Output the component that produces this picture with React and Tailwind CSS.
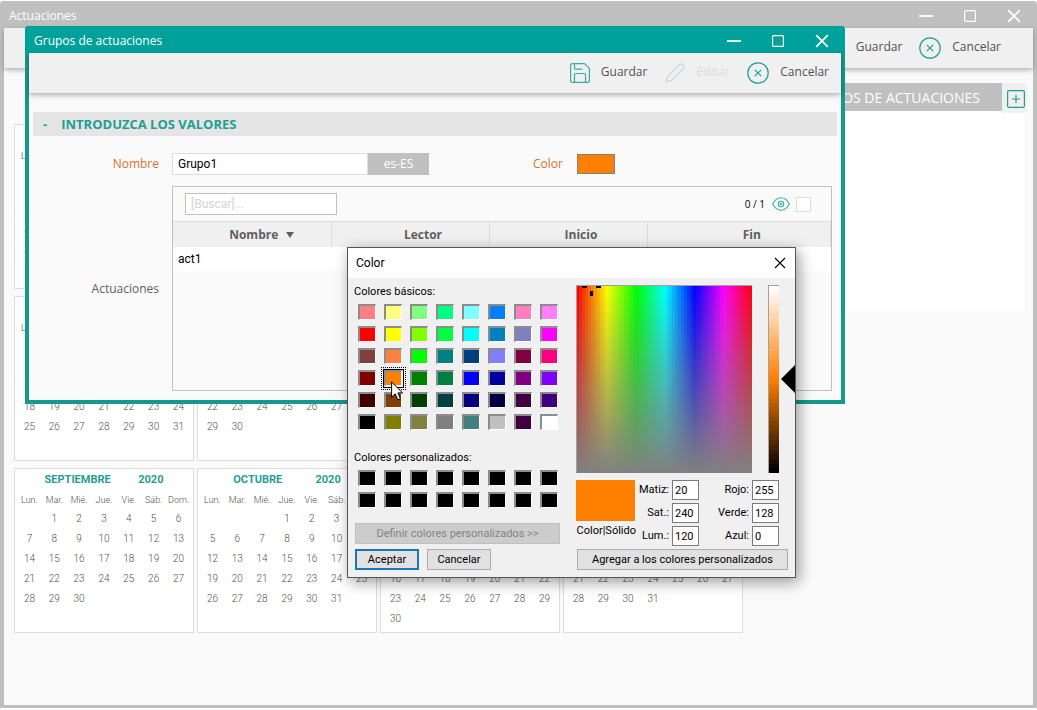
import React from "react";

const WEEKDAYS = ["Lun.", "Mar.", "Mié.", "Jue.", "Vie.", "Sáb.", "Dom."];

// start = empty cells before day 1 (week starts on Monday)
const MONTHS = [
  { name: "ENERO", start: 2, days: 31 },
  { name: "FEBRERO", start: 5, days: 29 },
  { name: "MARZO", start: 6, days: 31 },
  { name: "ABRIL", start: 2, days: 30 },
  { name: "MAYO", start: 4, days: 31 },
  { name: "JUNIO", start: 0, days: 30 },
  { name: "JULIO", start: 2, days: 31 },
  { name: "AGOSTO", start: 5, days: 31 },
  { name: "SEPTIEMBRE", start: 1, days: 30 },
  { name: "OCTUBRE", start: 3, days: 31 },
  { name: "NOVIEMBRE", start: 6, days: 30 },
  { name: "DICIEMBRE", start: 1, days: 31 },
];

const BASIC_COLORS = [
  "#ff8080", "#ffff80", "#80ff80", "#00ff80", "#80ffff", "#0080ff", "#ff80c0", "#ff80ff",
  "#ff0000", "#ffff00", "#80ff00", "#00ff40", "#00ffff", "#0080c0", "#8080c0", "#ff00ff",
  "#804040", "#ff8040", "#00ff00", "#008080", "#004080", "#8080ff", "#800040", "#ff0080",
  "#800000", "#ff8000", "#008000", "#008040", "#0000ff", "#0000a0", "#800080", "#8000ff",
  "#400000", "#804000", "#004000", "#004040", "#000080", "#000040", "#400040", "#400080",
  "#000000", "#808000", "#808040", "#808080", "#408080", "#c0c0c0", "#400040", "#ffffff",
];

const CUSTOM_COLORS = Array(16).fill("#000000");

function SaveIcon() {
  return (
    <svg width="20" height="20" viewBox="0 0 20 20" fill="none" stroke="#3aaea4" strokeWidth="1.2">
      <path d="M2.5 .6H14.5L19.4 5.4V17.5Q19.4 19.4 17.5 19.4H2.5Q.6 19.4 .6 17.5V2.5Q.6 .6 2.5 .6Z" />
      <path d="M4.5 .6V5.2Q4.5 6.2 5.5 6.2H12.5" />
      <path d="M4.5 19.4V11.5Q4.5 10.5 5.5 10.5H14.5Q15.5 10.5 15.5 11.5V19.4" />
    </svg>
  );
}

function PencilIcon() {
  return (
    <svg width="20" height="20" viewBox="0 0 20 20" fill="none" stroke="#b9ded9" strokeWidth="1.2">
      <path d="M1 19L2.6 13.4L14.2 1.9Q16.4 .2 18.2 1.9Q19.9 3.8 18.2 5.8L6.6 17.4Z" />
    </svg>
  );
}

function CancelIcon() {
  return (
    <svg width="22" height="22" viewBox="0 0 22 22" fill="none" stroke="#1fa096" strokeWidth="1.2">
      <circle cx="11" cy="11" r="10.2" />
      <path d="M7.8 7.8L14.2 14.2M14.2 7.8L7.8 14.2" />
    </svg>
  );
}

function EyeIcon() {
  return (
    <svg width="18" height="14" viewBox="0 0 18 14" fill="none" stroke="#3aaea4" strokeWidth="1.1">
      <path d="M.7 7Q4 .8 9 .8T17.3 7Q14 13.2 9 13.2T.7 7Z" />
      <circle cx="9" cy="7" r="2.7" />
      <circle cx="9" cy="7" r=".6" />
    </svg>
  );
}

function WindowButtons() {
  return (
    <div className="flex gap-[30px]">
      <button aria-label="Minimizar">
        <svg width="14" height="14" stroke="#fff" strokeWidth="1.8">
          <path d="M0 7H14" />
        </svg>
      </button>
      <button aria-label="Maximizar">
        <svg width="14" height="14" fill="none" stroke="#fff" strokeWidth="1.2">
          <rect x="1.6" y="1.6" width="10.8" height="10.8" rx="1" />
        </svg>
      </button>
      <button aria-label="Cerrar">
        <svg width="14" height="14" stroke="#fff" strokeWidth="1.7">
          <path d="M1.2 1.2L12.8 12.8M12.8 1.2L1.2 12.8" />
        </svg>
      </button>
    </div>
  );
}

function ToolbarButton({ icon, label, disabled }) {
  return (
    <button
      disabled={disabled}
      className="flex items-center gap-[11px] text-[12px] leading-5 text-[#505050] disabled:text-[#dcdcdc]"
    >
      {icon}
      <span className="pb-0.5">{label}</span>
    </button>
  );
}

function Month({ name, start, days }) {
  const cells = [...Array(start).fill(""), ...Array.from({ length: days }, (_, i) => i + 1)];
  while (cells.length % 7) cells.push("");
  const weeks = [];
  for (let i = 0; i < cells.length; i += 7) weeks.push(cells.slice(i, i + 7));

  return (
    <div className="h-[165px] border border-[#dcdcdc] bg-white px-0.5 font-[Roboto,sans-serif]">
      <div className="flex h-[22px] items-center justify-evenly text-[11px] font-bold text-[#1f9e94]">
        <span>{name}</span>
        <span>2020</span>
      </div>
      <table className="w-full table-fixed text-center text-[#505050]">
        <thead>
          <tr>
            {WEEKDAYS.map((d) => (
              <th key={d} className="h-[18px] p-0 text-[9px] leading-none font-light">
                {d}
              </th>
            ))}
          </tr>
        </thead>
        <tbody>
          {weeks.map((week, i) => (
            <tr key={i}>
              {week.map((day, j) => (
                <td key={j} className="h-5 p-0 text-[10px] leading-none font-light">
                  {day}
                </td>
              ))}
            </tr>
          ))}
        </tbody>
      </table>
    </div>
  );
}

function GroupsDialog() {
  return (
    <section className="absolute top-[25px] left-[21px] flex h-[378px] w-[820px] flex-col rounded-t-sm bg-[#14998f] px-1 pb-1">
      <header className="-mx-1 flex h-[27px] shrink-0 items-center justify-between rounded-t-sm bg-[#00a19a] pt-0.5 pr-4 pl-[9px]">
        <h2 className="text-[12px] leading-5 text-white">Grupos de actuaciones</h2>
        <WindowButtons />
      </header>
      <div className="flex-1 bg-[#fafafa]">
        <div className="flex h-10 items-center justify-end gap-[18px] bg-[#f0f0f0] pr-3 shadow-[0_2px_5px_rgba(0,0,0,0.3)]">
          <ToolbarButton icon={<SaveIcon />} label="Guardar" />
          <ToolbarButton icon={<PencilIcon />} label="Editar" disabled />
          <ToolbarButton icon={<CancelIcon />} label="Cancelar" />
        </div>

        <h3 className="mx-1 mt-[19px] flex h-6 items-center gap-[14px] bg-[#e5e5e5] pt-0.5 pl-[10px] text-[13px] font-bold text-[#1f9e94]">
          <span>-</span>
          <span>INTRODUZCA LOS VALORES</span>
        </h3>

        <div className="mt-[17px] flex h-[22px] items-center">
          <label htmlFor="nombre" className="w-[130px] text-right text-[12px] text-[#d9702b]">
            Nombre
          </label>
          <input
            id="nombre"
            defaultValue="Grupo1"
            className="ml-[13px] h-[22px] w-[196px] border border-[#dcdcdc] bg-white px-[5px] font-[Roboto,sans-serif] text-[12px] text-black"
          />
          <button className="h-[22px] w-[61px] bg-[#c0c0c0] text-[12px] text-white">es-ES</button>
          <span className="ml-[104px] w-[30px] text-[12px] text-[#d9702b]">Color</span>
          <button aria-label="Color" className="ml-[14px] h-5 w-[38px] border border-[#808080] bg-[#ff8000]" />
        </div>

        <div className="mt-[11px] mr-[9px] flex h-[205px] items-center">
          <span className="w-[130px] text-right text-[12px] text-[#606060]">Actuaciones</span>
          <div className="ml-[13px] h-full flex-1 border border-[#c0c0c0]">
            <div className="flex h-[34px] items-center pr-5 pl-3">
              <input
                aria-label="Buscar"
                placeholder="[Buscar]..."
                className="h-[22px] w-[152px] border border-[#c0c0c0] bg-white px-[5px] font-[Roboto,sans-serif] text-[12px] placeholder:text-[#d4d4d4]"
              />
              <span className="ml-auto text-[10px] text-black">0 / 1</span>
              <button aria-label="Ver" className="ml-[7px]">
                <EyeIcon />
              </button>
              <input
                type="checkbox"
                aria-label="Seleccionar todo"
                className="ml-[6px] size-[15px] appearance-none border border-[#dcdcdc] bg-white"
              />
            </div>
            <table className="w-full table-fixed">
              <thead>
                <tr className="h-[25px] border-t border-[#dcdcdc] bg-[#f0f0f0] text-[12px] text-[#606060]">
                  <th className="w-[158px] border-r border-[#dcdcdc] p-0 pt-0.5 pl-5 font-bold">
                    <span className="flex items-center justify-center gap-2">
                      Nombre
                      <svg width="8" height="6" fill="#606060">
                        <path d="M0 0H8L4 6Z" />
                      </svg>
                    </span>
                  </th>
                  <th className="w-[158px] border-r border-[#dcdcdc] p-0 pt-0.5 pl-[26px] font-bold">Lector</th>
                  <th className="w-[158px] border-r border-[#dcdcdc] p-0 pt-0.5 pl-[26px] font-bold">Inicio</th>
                  <th className="border-r border-[#dcdcdc] p-0 pt-0.5 pl-[26px] font-bold">Fin</th>
                </tr>
              </thead>
              <tbody>
                <tr className="h-6 bg-white font-[Roboto,sans-serif] text-[12px] text-black">
                  <td className="p-0 pl-[5px]">act1</td>
                  <td />
                  <td />
                  <td />
                </tr>
              </tbody>
            </table>
          </div>
        </div>
      </div>
    </section>
  );
}

function Swatch({ color, selected }) {
  return (
    <button
      aria-label={color}
      style={{ backgroundColor: color }}
      className="relative h-4 w-[18px] border border-t-2 border-l-2 border-t-[#8c8c8c] border-r-white border-b-white border-l-[#8c8c8c]"
    >
      {selected && (
        <>
          <span className="absolute -inset-[3px] border border-black" />
          <span className="absolute -inset-[5px] border border-dotted border-black" />
        </>
      )}
    </button>
  );
}

function Spectrum() {
  return (
    <svg width="176" height="188" shapeRendering="crispEdges">
      <defs>
        <linearGradient id="fade" x1="0" y1="0" x2="0" y2="1">
          <stop offset="0" stopColor="#808080" stopOpacity="0" />
          <stop offset="1" stopColor="#808080" />
        </linearGradient>
      </defs>
      {Array.from({ length: 59 }, (_, i) => (
        <rect key={i} x={i * 3} y="0" width="3" height="188" fill={`hsl(${i * 6.15} 100% 50%)`} />
      ))}
      <rect width="176" height="188" fill="url(#fade)" />
      <path d="M0 .5H176M.5 0V188" stroke="#a0a0a0" />
      <path d="M6 1h5v2h-5zM20 1h5v2h-5zM14 6h3v5h-3z" fill="#000" />
    </svg>
  );
}

function LuminanceBar() {
  return (
    <div className="flex">
      <svg width="11" height="188" shapeRendering="crispEdges">
        {Array.from({ length: 40 }, (_, i) => (
          <rect key={i} x="0" y={i * 4.7} width="11" height="5" fill={`hsl(30 100% ${100 - i * 2.56}%)`} />
        ))}
        <path d="M0 .5H11M.5 0V188" stroke="#a0a0a0" />
      </svg>
      <svg width="16" height="188">
        <path d="M2 94L16 80V108Z" fill="#000" />
      </svg>
    </div>
  );
}

function NumberField({ id, label, value }) {
  return (
    <div className="flex h-5 items-center justify-end gap-[3px]">
      <label htmlFor={id}>{label}</label>
      <input
        id={id}
        defaultValue={value}
        className="h-5 w-[27px] border border-[#7a7a7a] bg-white px-0.5"
      />
    </div>
  );
}

function Cursor() {
  return (
    <svg width="13" height="20" viewBox="0 0 13 20" className="absolute top-[133px] left-[43px]">
      <path
        d="M.6 1V16.2L4.2 12.8L6.8 18.8L9.4 17.6L6.9 11.9H11.6Z"
        fill="#fff"
        stroke="#000"
        strokeWidth="1"
      />
    </svg>
  );
}

function ColorDialog() {
  return (
    <section className="absolute top-[246px] left-[343px] w-[449px] border border-[#555] bg-[#f0f0f0] font-[Roboto,sans-serif] text-[11px] leading-4 text-black shadow-[3px_4px_14px_rgba(0,0,0,0.4)]">
      <header className="flex h-[30px] items-center justify-between bg-white pr-[9px] pl-2">
        <h2 className="text-[12px]">Color</h2>
        <button aria-label="Cerrar">
          <svg width="12" height="12" stroke="#000" strokeWidth="1.1">
            <path d="M1 1L11 11M11 1L1 11" />
          </svg>
        </button>
      </header>
      <div className="flex justify-between">
        <div className="flex w-[212px] flex-col pt-1.5 pb-[7px] pl-1.5">
          <p>Colores básicos:</p>
          <div className="mt-1 ml-1 grid grid-cols-[repeat(8,18px)] gap-x-2 gap-y-1.5">
            {BASIC_COLORS.map((color, i) => (
              <Swatch key={i} color={color} selected={color === "#ff8000"} />
            ))}
          </div>
          <p className="mt-5">Colores personalizados:</p>
          <div className="mt-1 ml-1 grid grid-cols-[repeat(8,18px)] gap-x-2 gap-y-1.5">
            {CUSTOM_COLORS.map((color, i) => (
              <Swatch key={i} color={color} />
            ))}
          </div>
          <button
            disabled
            className="mt-[15px] ml-px h-[21px] border border-[#bfbfbf] bg-[#ccc] text-[#838383]"
          >
            Definir colores personalizados &gt;&gt;
          </button>
          <div className="mt-[5px] ml-px flex gap-2">
            <button className="h-[21px] w-16 border-2 border-[#1a74b8] bg-[#e1e1e1]">Aceptar</button>
            <button className="h-[21px] w-16 border border-[#adadad] bg-[#e1e1e1]">Cancelar</button>
          </div>
        </div>

        <div className="flex w-[219px] flex-col pt-[7px]">
          <div className="flex justify-between">
            <Spectrum />
            <LuminanceBar />
          </div>
          <div className="mt-[7px] flex pr-4">
            <div className="flex w-[60px] flex-col">
              <span className="h-[41px] w-[59px] bg-[#ff8000]" />
              <span className="mt-0.5 text-right">Color|Sólido</span>
            </div>
            <div className="flex w-[63px] flex-col gap-[3px]">
              <NumberField id="matiz" label="Matiz:" value="20" />
              <NumberField id="sat" label="Sat.:" value="240" />
              <NumberField id="lum" label="Lum.:" value="120" />
            </div>
            <div className="flex flex-1 flex-col gap-[3px]">
              <NumberField id="rojo" label="Rojo:" value="255" />
              <NumberField id="verde" label="Verde:" value="128" />
              <NumberField id="azul" label="Azul:" value="0" />
            </div>
          </div>
          <button className="mt-[3px] mr-[7px] ml-px h-[21px] border border-[#adadad] bg-[#e1e1e1]">
            Agregar a los colores personalizados
          </button>
        </div>
      </div>
      <Cursor />
    </section>
  );
}

function App() {
  return (
    <div className="min-h-screen bg-white pt-px font-['Open_Sans',sans-serif]">
      <main className="relative flex min-h-[707px] flex-col rounded-t-sm border-x-4 border-b-[3px] border-[#c0c0c0] bg-[#fafafa]">
        <header className="-mx-1 flex h-[27px] items-center justify-between rounded-t-sm bg-[#c0c0c0] pt-0.5 pr-4 pl-[9px]">
          <h1 className="text-[12px] leading-5 text-white">Actuaciones</h1>
          <WindowButtons />
        </header>
        <div className="flex h-10 items-center justify-end gap-[17px] bg-[#f0f0f0] pr-8 shadow-[0_2px_5px_rgba(0,0,0,0.3)]">
          <ToolbarButton icon={<SaveIcon />} label="Guardar" />
          <ToolbarButton icon={<CancelIcon />} label="Cancelar" />
        </div>

        <div className="flex items-start gap-3 pr-1.5 pl-2.5">
          <div className="mt-14 grid shrink-0 grid-cols-[repeat(4,180px)] gap-x-[3px] gap-y-[7px]">
            {MONTHS.map((month) => (
              <Month key={month.name} {...month} />
            ))}
          </div>
          <aside className="mt-[15px] min-w-0 flex-1">
            <div className="flex h-7">
              <h2 className="flex-1 bg-[#c0c0c0] pr-[22px] text-right text-[14px] leading-[30px] text-white">
                GRUPOS DE ACTUACIONES
              </h2>
              <button
                aria-label="Añadir grupo"
                className="flex h-[30px] w-[25px] items-center justify-center bg-[#f0f0f0] pt-0.5 pl-0.5"
              >
                <svg width="18" height="18" fill="none" stroke="#1f9e94" strokeWidth="1.2">
                  <rect x=".6" y=".6" width="16.8" height="16.8" rx="1.5" />
                  <path d="M9 5V13M5 9H13" />
                </svg>
              </button>
            </div>
            <div className="mr-0.5 h-[200px] bg-white" />
          </aside>
        </div>

        <GroupsDialog />
        <ColorDialog />
      </main>
    </div>
  );
}

export default App;
